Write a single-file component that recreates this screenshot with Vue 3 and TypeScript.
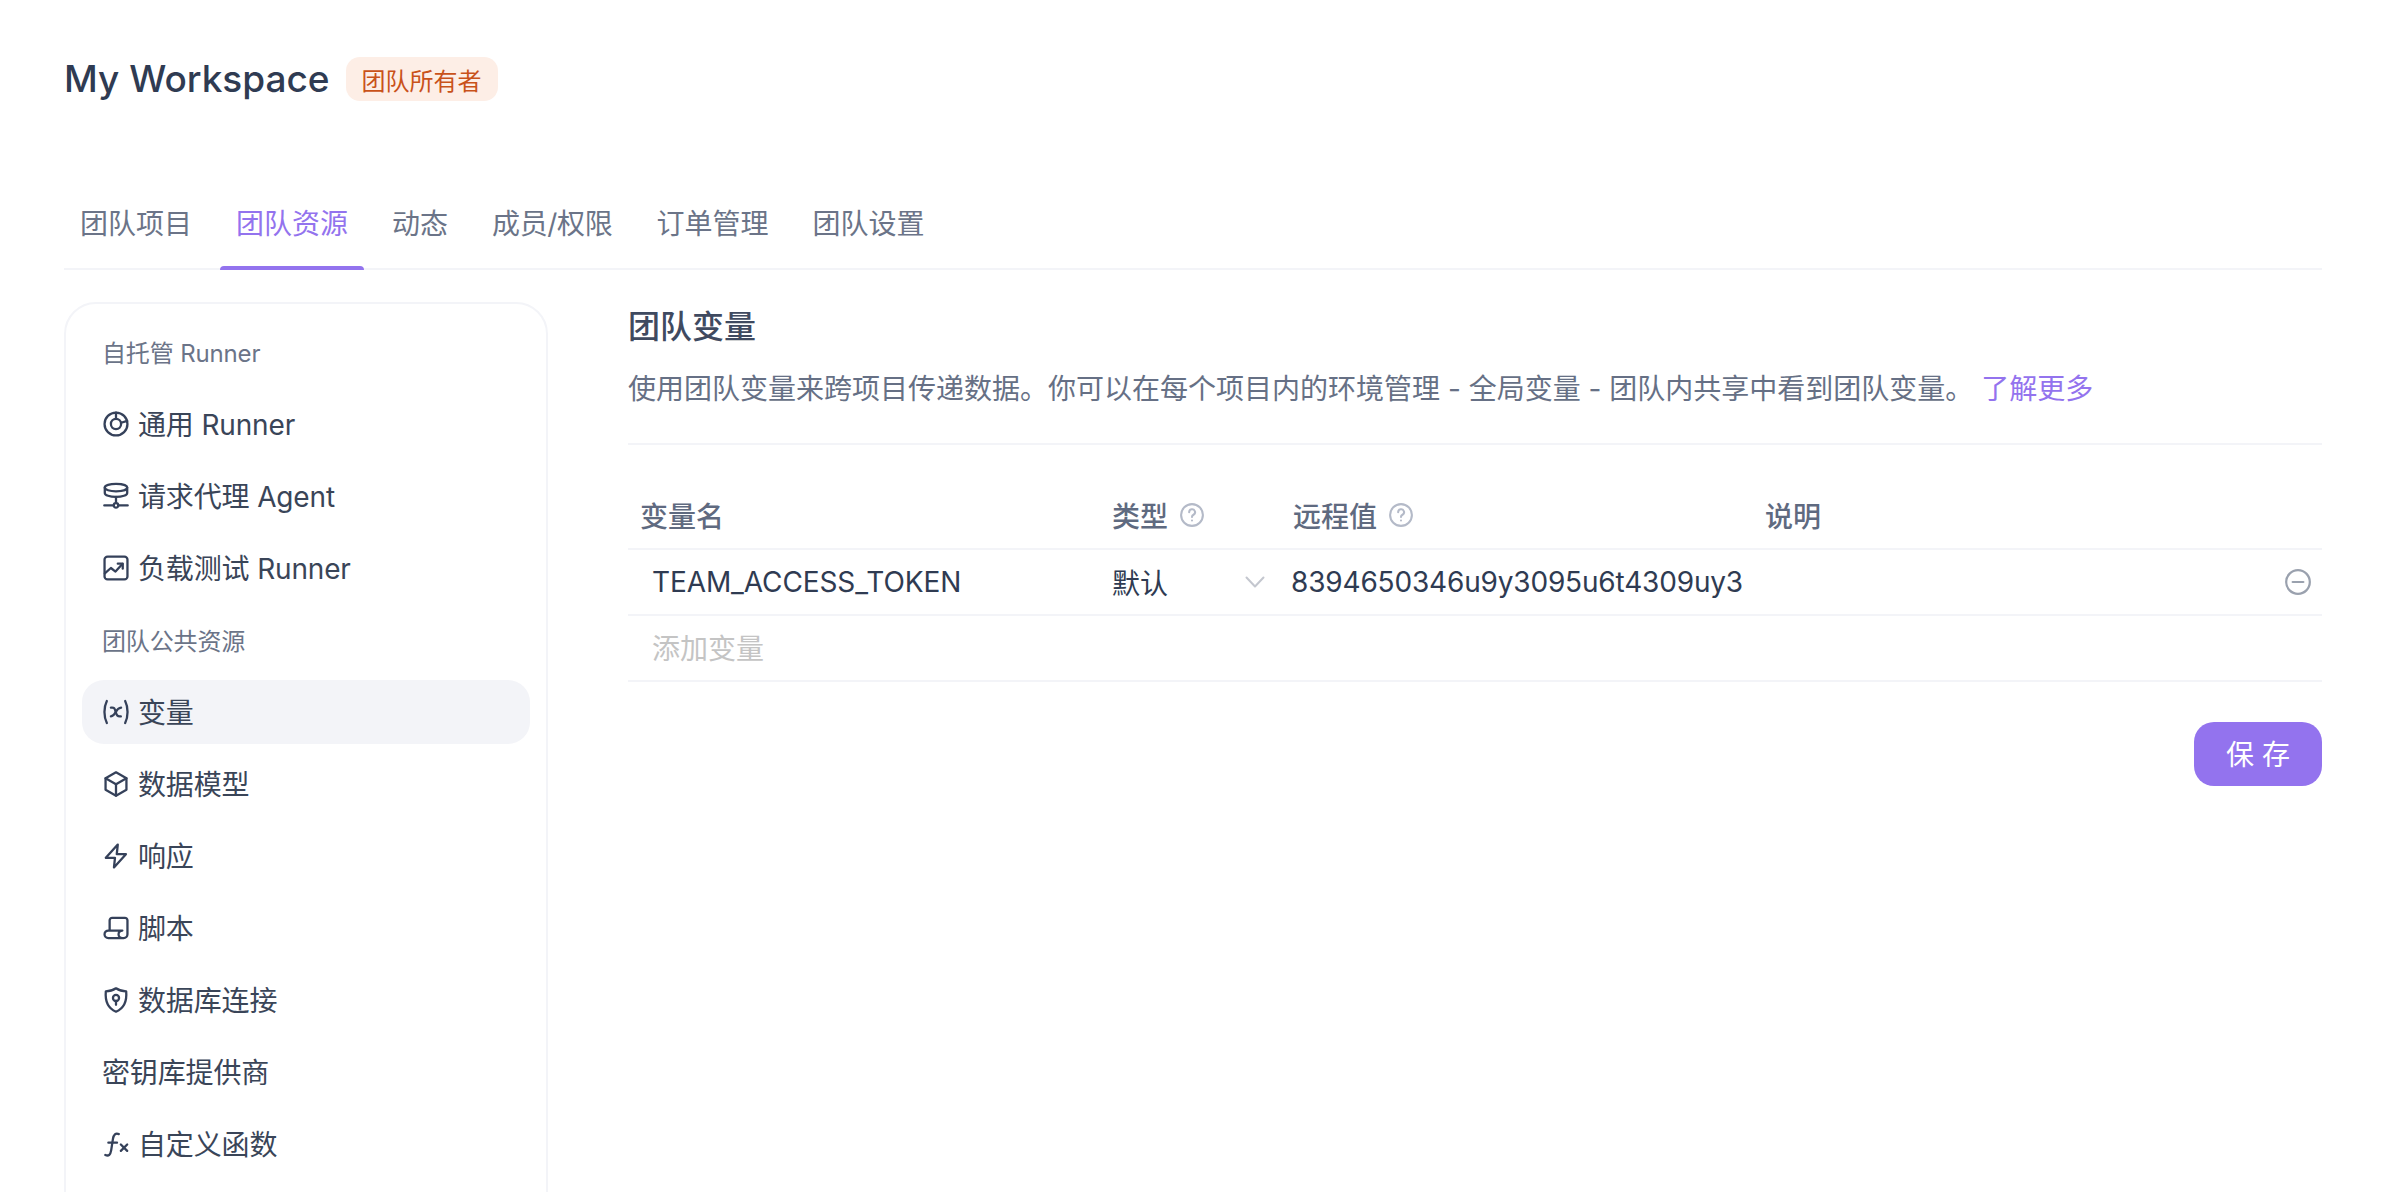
<script setup lang="ts">
interface NavEntry {
  label: string
  kind: 'group' | 'item'
  icon?: string[]
  active?: boolean
}

const circle = (cx: number, cy: number, r: number): string =>
  `M${cx - r} ${cy}a${r} ${r} 0 1 0 ${2 * r} 0a${r} ${r} 0 1 0 ${-2 * r} 0`

const tabs: string[] = ['团队项目', '团队资源', '动态', '成员/权限', '订单管理', '团队设置']
const activeTab = '团队资源'

const nav: NavEntry[] = [
  { label: '自托管 Runner', kind: 'group' },
  { label: '通用 Runner', kind: 'item', icon: [circle(12, 12, 9), circle(12, 12, 4), 'M12 3v5', 'M16 11l4.800-1.500'] },
  { label: '请求代理 Agent', kind: 'item', icon: ['M3.200 5.400c0-1.700 3.900-2.900 8.800-2.900s8.800 1.200 8.800 2.900-3.900 2.900-8.800 2.900-8.800-1.200-8.800-2.900z', 'M3.200 5.400v4.200c0 1.800 3.900 3.100 8.800 3.100s8.800-1.300 8.800-3.100V5.400', 'M12 12.700v4.800', circle(12, 19.400, 1.800), 'M2.800 19.400h7.400', 'M13.800 19.400h7.400'] },
  { label: '负载测试 Runner', kind: 'item', icon: ['M5.400 3h13.200A2.400 2.400 0 0 1 21 5.400v13.200a2.400 2.400 0 0 1-2.400 2.400H5.400A2.400 2.400 0 0 1 3 18.600V5.400A2.400 2.400 0 0 1 5.400 3z', 'M3.200 16.200l4.800-4.200 3.600 2.800 5.400-6', 'M13.400 8.600h3.900v3.900'] },
  { label: '团队公共资源', kind: 'group' },
  { label: '变量', kind: 'item', active: true, icon: ['M4.800 3.400c-2.500 5-2.500 12.200 0 17.200', 'M19.200 3.400c2.500 5 2.500 12.200 0 17.200', 'M8 8.600c2.800-.4 3 .6 3.800 3.400s1.400 3.800 4 3.400', 'M16 8.600c-2.100.2-3.200 1.500-4.200 3.400s-1.700 3.200-3.800 3.400'] },
  { label: '数据模型', kind: 'item', icon: ['M12 2.800l8.200 4.700v9l-8.200 4.700-8.200-4.700v-9z', 'M3.800 7.500l8.200 4.700 8.200-4.700', 'M12 12.200v9'] },
  { label: '响应', kind: 'item', icon: ['M13.400 3L4 13.400h7.200L10.400 21l9.400-10.400h-7.200z'] },
  { label: '脚本', kind: 'item', icon: ['M17 20H6a3 3 0 0 1 0-6h11a3 3 0 0 0 0 6h1a3 3 0 0 0 3-3V6a2 2 0 0 0-2-2H9a2 2 0 0 0-2 2v8'] },
  { label: '数据库连接', kind: 'item', icon: ['M12 2.800c2.400 1.600 5 2.400 8 2.400.6 6.800-1 13-8 16-7-3-8.600-9.200-8-16 3 0 5.600-.8 8-2.400z', circle(12, 10.400, 2.400), 'M12 12.800v3'] },
  { label: '密钥库提供商', kind: 'item' },
  { label: '自定义函数', kind: 'item', icon: ['M3.600 20.600c2.800 1.200 4-.2 4.600-3.600l1.400-9c.6-3.400 2-4.800 4.600-3.800', 'M6 11h6.800', 'M15.800 12.400l5 5', 'M20.800 12.400l-5 5'] },
]

const helpIcon: string[] = [circle(12, 12, 10), 'M9.400 9.400a2.700 2.700 0 1 1 4 2.400c-.9.500-1.400 1.100-1.400 2', 'M12 17v.1']
</script>

<template>
  <div class="page">
    <header class="title-row">
      <h1 class="title">My Workspace</h1>
      <span class="badge">团队所有者</span>
    </header>

    <nav class="tabs">
      <span
        v-for="tab in tabs"
        :key="tab"
        class="tab"
        :class="{ 'tab-active': tab === activeTab, 'tab-tight': tab.includes('/') }"
      >{{ tab }}</span>
    </nav>

    <div class="body">
      <aside class="sidebar">
        <div
          v-for="entry in nav"
          :key="entry.label"
          class="nav-row"
          :class="{ 'nav-group': entry.kind === 'group', 'nav-active': entry.active }"
        >
          <svg v-if="entry.icon" class="nav-icon" viewBox="1 1 22 22">
            <path v-for="d in entry.icon" :key="d" :d="d" />
          </svg>
          <span>{{ entry.label }}</span>
        </div>
      </aside>

      <main class="main">
        <h2 class="heading">团队变量</h2>
        <p class="desc">使用团队变量来跨项目传递数据。你可以在每个项目内的环境管理 - 全局变量 - 团队内共享中看到团队变量。 <a class="link">了解更多</a></p>
        <div class="divider"></div>

        <div class="grid head">
          <div class="cell-head">变量名</div>
          <div class="cell-head">
            类型
            <svg class="help" viewBox="1 1 22 22"><path v-for="d in helpIcon" :key="d" :d="d" /></svg>
          </div>
          <div class="cell-head">
            远程值
            <svg class="help" viewBox="1 1 22 22"><path v-for="d in helpIcon" :key="d" :d="d" /></svg>
          </div>
          <div class="cell-head">说明</div>
        </div>

        <div class="grid row">
          <div class="cell-name">TEAM_ACCESS_TOKEN</div>
          <div class="cell-type">
            <span>默认</span>
            <svg class="chevron" viewBox="0 0 20 12"><path d="M1.500 1.500L10 10.500l8.500-9" /></svg>
          </div>
          <div class="cell-value">8394650346u9y3095u6t4309uy3</div>
          <div class="cell-action">
            <svg class="minus" viewBox="1 1 22 22"><circle cx="12" cy="12" r="10" /><path d="M7.500 12h9" /></svg>
          </div>
        </div>

        <div class="row row-add">添加变量</div>

        <div class="actions">
          <button class="save" type="button">保 存</button>
        </div>
      </main>
    </div>
  </div>
</template>

<style scoped>
.page {
  height: 1192px;
  overflow: hidden;
  box-sizing: border-box;
  padding: 57px 64px 0;
  background: #fff;
  color: #2f3b52;
  font-family: Inter, "Noto Sans CJK SC", sans-serif;
}

.title-row {
  display: flex;
  align-items: center;
  gap: 16px;
  height: 44px;
  margin-bottom: 99px;
}

.title {
  margin: 0;
  font-size: 37px;
  font-weight: 450;
  line-height: 44px;
  white-space: nowrap;
  color: #2f3b52;
}

.badge {
  display: inline-flex;
  align-items: center;
  height: 44px;
  padding: 0 16px;
  border-radius: 14px;
  background: #fdeee6;
  color: #c9521a;
  font-size: 24px;
}

.tabs {
  display: flex;
  gap: 12px;
  border-bottom: 2px solid #f3f4f8;
}

.tab {
  position: relative;
  padding: 2px 16px 22px;
  font-size: 28px;
  line-height: 44px;
  color: #6b7488;
}

.tab-tight {
  letter-spacing: -0.35px;
}

.tab-active {
  color: #9373ee;
}

.tab-active::after {
  content: "";
  position: absolute;
  left: 0;
  right: 0;
  bottom: -2px;
  height: 4px;
  border-radius: 4px 4px 0 0;
  background: #9373ee;
}

.body {
  display: flex;
  gap: 80px;
  margin-top: 32px;
}

.sidebar {
  flex: 0 0 484px;
  box-sizing: border-box;
  display: flex;
  flex-direction: column;
  gap: 8px;
  padding: 16px 16px 120px;
  border: 2px solid #f3f4f8;
  border-radius: 32px;
}

.nav-row {
  box-sizing: border-box;
  display: flex;
  align-items: center;
  gap: 8px;
  height: 64px;
  padding: 0 20px 2px;
  border-radius: 22px;
  font-size: 28px;
  letter-spacing: -0.15px;
  color: #3a4558;
}

.nav-group {
  font-size: 24px;
  color: #6b7488;
}

.nav-active {
  background: #f3f4f8;
}

.nav-icon {
  flex: none;
  width: 28px;
  height: 28px;
  margin-top: 2px;
  fill: none;
  stroke: #35415a;
  stroke-width: 1.800;
  stroke-linecap: round;
  stroke-linejoin: round;
}

.main {
  flex: 1;
  min-width: 0;
  padding-top: 3px;
}

.heading {
  margin: 0 0 18px;
  font-size: 32px;
  font-weight: 500;
  line-height: 44px;
  color: #3f4a60;
}

.desc {
  margin: 0 0 32px;
  font-size: 28px;
  line-height: 44px;
  color: #667085;
}

.link {
  color: #9373ee;
}

.divider {
  height: 2px;
  margin-bottom: 39px;
  background: #f3f4f8;
}

.grid {
  display: grid;
  grid-template-columns: 472px 181px 472px 1fr;
  align-items: center;
}

.head,
.row {
  box-sizing: content-box;
  height: 64px;
  border-bottom: 2px solid #f3f4f8;
}

.cell-head {
  display: flex;
  align-items: center;
  gap: 12px;
  padding: 0 0 2px 12px;
  font-size: 28px;
  font-weight: 500;
  color: #5f6a80;
}

.help {
  width: 24px;
  height: 24px;
  fill: none;
  stroke: #b4bac8;
  stroke-width: 1.900;
  stroke-linecap: round;
}

.cell-name {
  padding-left: 24px;
  font-size: 28px;
  letter-spacing: -0.1px;
  color: #2f3b52;
}

.cell-type {
  display: flex;
  align-items: center;
  justify-content: space-between;
  padding: 0 16px 0 12px;
  font-size: 28px;
  color: #2f3b52;
}

.chevron {
  width: 20px;
  height: 12px;
  fill: none;
  stroke: #c4c7cf;
  stroke-width: 2;
  stroke-linecap: round;
  stroke-linejoin: round;
}

.cell-value {
  padding-left: 10px;
  font-size: 28px;
  letter-spacing: -0.17px;
  white-space: nowrap;
  color: #2f3b52;
}

.cell-action {
  display: flex;
  justify-content: flex-end;
  padding-right: 11px;
}

.minus {
  width: 26px;
  height: 26px;
  fill: none;
  stroke: #9aa1ae;
  stroke-width: 1.900;
  stroke-linecap: round;
}

.row-add {
  display: flex;
  align-items: center;
  padding: 0 0 2px 24px;
  box-sizing: border-box;
  height: 66px;
  font-size: 28px;
  color: #c4c4c4;
}

.actions {
  display: flex;
  justify-content: flex-end;
  margin-top: 40px;
}

.save {
  width: 128px;
  height: 64px;
  padding: 0 0 2px;
  border: none;
  border-radius: 20px;
  background: #9373ee;
  color: #fff;
  font-family: inherit;
  font-size: 28px;
}
</style>
